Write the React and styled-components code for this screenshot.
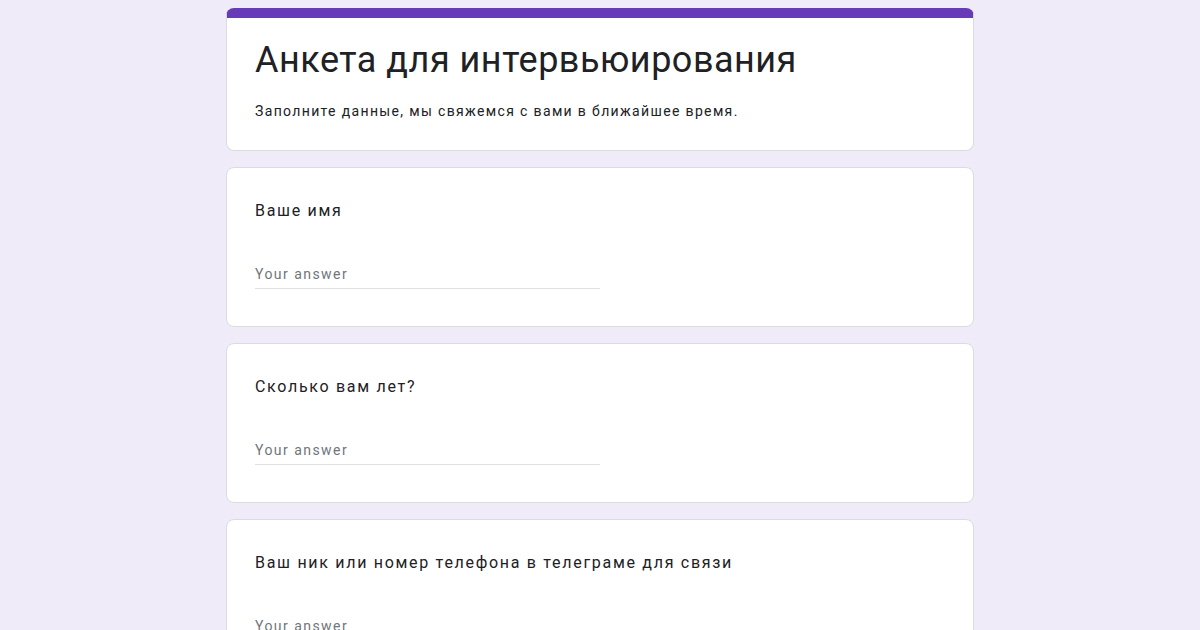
import React from "react";
import styled, { createGlobalStyle } from "styled-components";

const GlobalStyle = createGlobalStyle`
  body {
    margin: 0;
    background: #f0ebf8;
    font-family: Roboto, "Liberation Sans", Arial, sans-serif;
    color: #202124;
  }
`;

const Page = styled.div`
  display: flex;
  flex-direction: column;
  align-items: center;
  padding-top: 8px;
  height: 622px;
  overflow: hidden;
`;

const Column = styled.div`
  width: 748px;
  display: flex;
  flex-direction: column;
  gap: 16px;
`;

const Card = styled.div`
  background: #fff;
  border: 1px solid #dadce0;
  border-radius: 8px;
  overflow: hidden;
`;

const HeaderCard = styled(Card)`
  border-top: 10px solid #673ab7;
`;

const HeaderBody = styled.div`
  padding: 20px 28px 29px;
`;

const Title = styled.h1`
  margin: 0;
  font-size: 36px;
  font-weight: 400;
  line-height: 45px;
  letter-spacing: 0.5px;
  color: #202124;
`;

const Description = styled.p`
  margin: 18px 0 0;
  font-size: 14px;
  line-height: 20px;
  letter-spacing: 1.35px;
  color: #202124;
`;

const QuestionBody = styled.div`
  padding: 31px 28px 37px;
  display: flex;
  flex-direction: column;
`;

const Question = styled.div`
  font-size: 16px;
  line-height: 24px;
  letter-spacing: 1.7px;
  color: #202124;
`;

const Answer = styled.div`
  margin-top: 41px;
  width: 50%;
  padding-bottom: 4px;
  border-bottom: 1px solid #e0e0e0;
  font-size: 14px;
  line-height: 20px;
  letter-spacing: 1.45px;
  color: #70757a;
`;

const questions = [
  "Ваше имя",
  "Сколько вам лет?",
  "Ваш ник или номер телефона в телеграме для связи",
];

export default function App() {
  return (
    <>
      <GlobalStyle />
      <Page>
        <Column>
          <HeaderCard>
            <HeaderBody>
              <Title>Анкета для интервьюирования</Title>
              <Description>
                Заполните данные, мы свяжемся с вами в ближайшее время.
              </Description>
            </HeaderBody>
          </HeaderCard>
          {questions.map((q) => (
            <Card key={q}>
              <QuestionBody>
                <Question>{q}</Question>
                <Answer>Your answer</Answer>
              </QuestionBody>
            </Card>
          ))}
        </Column>
      </Page>
    </>
  );
}
